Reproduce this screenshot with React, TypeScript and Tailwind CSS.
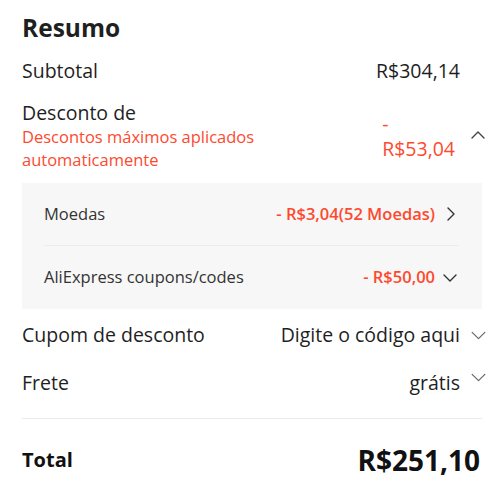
const Chevron = ({ dir, className, sw = 1.4 }: { dir: "up" | "down" | "right"; className?: string; sw?: number }) => {
  const d =
    dir === "up" ? "M2 10 L8 4 L14 10" : dir === "down" ? "M2 5 L8 11 L14 5" : "M5 2 L11 8 L5 14"
  return (
    <svg viewBox="0 0 16 16" className={className} fill="none" stroke="currentColor" strokeWidth={sw}>
      <path d={d} strokeLinecap="round" strokeLinejoin="round" />
    </svg>
  )
}

export default function App() {
  return (
    <div className="w-[500px] h-[479px] overflow-hidden bg-white pl-[22px] pr-[18px] font-['Open_Sans',sans-serif] text-[#1f1f1f]">
      {/* Header */}
      <h1 className="pt-[12px] text-[24.5px] font-bold leading-[32px]">Resumo</h1>

      {/* Subtotal */}
      <div className="mt-[15px] flex items-center justify-between text-[19.5px] leading-[24px]">
        <span>Subtotal</span>
        <span className="mr-[22px]">R$304,14</span>
      </div>

      {/* Desconto */}
      <div className="mt-[18px] flex items-center justify-between">
        <div>
          <div className="text-[19.5px] leading-[24px]">Desconto de</div>
          <div className="text-[16.5px] leading-[23px] text-[#fd4a2f]">
            Descontos máximos aplicados
            <br />
            automaticamente
          </div>
        </div>
        <div className="flex items-center">
          <div className="text-[19.5px] leading-[25px] text-[#fd4a2f]">
            <div>-</div>
            <div>R$53,04</div>
          </div>
          <Chevron dir="up" className="ml-[14px] mr-[-5px] h-[16px] w-[18px] text-[#444]" />
        </div>
      </div>

      {/* Breakdown */}
      <div className="mt-[12px] bg-[#f7f7f7] pl-[22px] pr-[23px] text-[16.5px]">
        <div className="flex h-[63px] items-center justify-between border-b border-[#ececec]">
          <span className="text-[#333]">Moedas</span>
          <div className="flex items-center">
            <span className="font-semibold text-[#fd4a2f]">- R$3,04(52 Moedas)</span>
            <Chevron dir="right" className="ml-[8px] h-[16px] w-[16px] text-[#333]" />
          </div>
        </div>
        <div className="flex h-[63px] items-center justify-between">
          <span className="text-[#333]">AliExpress coupons/codes</span>
          <div className="flex items-center">
            <span className="font-semibold text-[#fd4a2f]">- R$50,00</span>
            <Chevron dir="down" className="ml-[6px] h-[16px] w-[18px] text-[#333]" />
          </div>
        </div>
      </div>

      {/* Cupom */}
      <div className="mt-[14px] flex items-center justify-between text-[19.5px] leading-[24px]">
        <span>Cupom de desconto</span>
        <div className="flex items-center">
          <span>Digite o código aqui</span>
          <Chevron dir="down" sw={1.1} className="ml-[10px] mr-[-5px] h-[17px] w-[17px] text-[#666]" />
        </div>
      </div>

      {/* Frete */}
      <div className="mt-[24px] flex items-center justify-between text-[19.5px] leading-[24px]">
        <span>Frete</span>
        <div className="flex items-start">
          <span>grátis</span>
          <Chevron dir="down" sw={1.1} className="ml-[10px] mr-[-5px] mt-[-2px] h-[17px] w-[17px] text-[#666]" />
        </div>
      </div>

      <div className="mt-[23px] border-t border-[#ececec]" />

      {/* Total */}
      <div className="mt-[23px] flex items-center justify-between pr-[2px]">
        <span className="text-[20px] font-bold text-[#111]">Total</span>
        <span className="text-[28px] font-bold leading-[36px] text-[#111]">R$251,10</span>
      </div>
    </div>
  )
}
